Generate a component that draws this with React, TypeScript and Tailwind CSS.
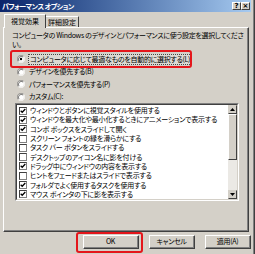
import React from "react";

const items: [boolean, string][] = [
  [true, "ウィンドウとボタンに視覚スタイルを使用する"],
  [true, "ウィンドウを最大化や最小化するときにアニメーションで表示する"],
  [true, "コンボ ボックスをスライドして開く"],
  [false, "スクリーン フォントの縁を滑らかにする"],
  [false, "タスク バー ボタンをスライドする"],
  [false, "デスクトップのアイコン名に影を付ける"],
  [true, "ドラッグ中にウィンドウの内容を表示する"],
  [false, "ヒントをフェードまたはスライドで表示する"],
  [true, "フォルダでよく使用するタスクを使用する"],
  [true, "マウス ポインタの下に影を表示する"],
];

function Radio({ on }: { on?: boolean }) {
  return (
    <svg width="8" height="8" viewBox="0 0 12 12" className="shrink-0">
      <path d="M10 2 A5.5 5.5 0 0 0 2 10" fill="none" stroke="#808080" strokeWidth="1.2" />
      <path d="M2 10 A5.5 5.5 0 0 0 10 2" fill="none" stroke="#ffffff" strokeWidth="1.2" />
      <circle cx="6" cy="6" r="4.3" fill="#ffffff" />
      <path d="M9 3 A4.3 4.3 0 0 0 3 9" fill="none" stroke="#404040" strokeWidth="1" />
      {on && <circle cx="6" cy="6" r="1.8" fill="#000" />}
    </svg>
  );
}

function Check({ on }: { on: boolean }) {
  return (
    <div className="w-[8px] h-[8px] shrink-0 bg-white border border-t-[#404040] border-l-[#404040] border-r-[#808080] border-b-[#808080] flex items-center justify-center">
      {on && (
        <svg width="6" height="6" viewBox="0 0 7 7">
          <path d="M0.8 3.2 L2.6 5 L6.2 1.2" fill="none" stroke="#000" strokeWidth="1.5" />
        </svg>
      )}
    </div>
  );
}

function Btn({ w, children }: { w: string; children: React.ReactNode }) {
  return (
    <div className={`${w} h-[14px] bg-[#d4d0c8] border-t border-l border-t-white border-l-white border-r border-b border-r-[#404040] border-b-[#404040] flex`}>
      <div className="flex-1 border-r border-b border-[#808080] flex items-center justify-center text-[7px] leading-none tracking-[-0.3px]">
        {children}
      </div>
    </div>
  );
}

function CapBtn({ children }: { children: React.ReactNode }) {
  return (
    <div className="w-[9px] h-[8px] bg-[#d4d0c8] border-t border-l border-t-white border-l-white border-r border-b border-r-[#404040] border-b-[#404040] flex items-center justify-center text-[7px] font-bold leading-none text-black font-['DejaVu_Sans',sans-serif]">
      {children}
    </div>
  );
}

export default function App() {
  return (
    <div className="w-[255px] h-[254px] overflow-hidden bg-[#d4d0c8] relative font-['Noto_Sans_CJK_JP',sans-serif] [font-feature-settings:'palt'] text-black">
      <div className="flex h-full">
        <div className="flex-1 flex flex-col min-w-0">
          {/* title bar */}
          <div className="h-[12px] shrink-0 flex items-center bg-gradient-to-r from-[#0a246a] to-[#a6caf0] pl-[2px] pr-[1px]">
            <span className="text-white text-[7px] font-bold leading-none tracking-[-0.5px]">パフォーマンス オプション</span>
            <div className="ml-auto flex">
              <CapBtn>?</CapBtn>
              <CapBtn>×</CapBtn>
            </div>
          </div>
          {/* tabs */}
          <div className="flex items-end h-[15px] pl-[4px] shrink-0">
            <div className="w-[42px] h-[14px] bg-[#d4d0c8] border-t border-l border-white border-r border-r-[#404040] flex items-center justify-center text-[7px] leading-none relative z-10 -mb-[1px]">
              視覚効果
            </div>
            <div className="w-[33px] h-[11px] border-t border-t-white border-r border-r-[#404040] flex items-center justify-center text-[7px] leading-none">
              詳細設定
            </div>
          </div>
          {/* panel */}
          <div className="ml-[3px] w-[246px] h-[205px] shrink-0 border-t border-l border-white border-r border-b border-r-[#404040] border-b-[#404040] flex">
            <div className="flex-1 border-r border-b border-[#808080] flex flex-col pl-[8px] pt-[3px]">
              <div className="text-[7px] leading-[8.5px] tracking-[-0.3px] whitespace-nowrap">
                コンピュータの Windows のデザインとパフォーマンスに使う設定を選択してくださ
                <br />
                い。
              </div>
              <div className="flex flex-col mt-[5px] pl-[5px] text-[7px] leading-none tracking-[-0.3px]">
                <div className="h-[12.5px] flex items-center gap-[3px]">
                  <Radio on />
                  <span className="border border-dotted border-[#444] px-[1px] py-[1px] bg-[#dcd9d3]">
                    コンピュータに応じて最適なものを自動的に選択する(L)
                  </span>
                </div>
                <div className="h-[12.5px] flex items-center gap-[4px]">
                  <Radio />
                  <span>デザインを優先する(B)</span>
                </div>
                <div className="h-[12.5px] flex items-center gap-[4px]">
                  <Radio />
                  <span>パフォーマンスを優先する(P)</span>
                </div>
                <div className="h-[12.5px] flex items-center gap-[4px]">
                  <Radio />
                  <span>カスタム(C):</span>
                </div>
              </div>
              {/* listbox */}
              <div className="ml-[3px] w-[224px] h-[98px] border-t border-l border-[#808080] border-r border-b border-r-white border-b-white flex">
                <div className="flex-1 border-t border-l border-[#404040] border-r border-b border-r-[#d4d0c8] border-b-[#d4d0c8] bg-white flex">
                  <div className="flex-1 flex flex-col pt-[1px] pl-[2px] text-[7px] leading-none tracking-[-0.2px]">
                    {items.map(([on, t], i) => (
                      <div key={i} className="h-[9.3px] flex items-center gap-[3px] whitespace-nowrap">
                        <Check on={on} />
                        <span>{t}</span>
                      </div>
                    ))}
                  </div>
                  {/* scrollbar */}
                  <div className="w-[9px] flex flex-col">
                    <div className="h-[9px] bg-[#d4d0c8] border-t border-l border-t-[#d4d0c8] border-l-[#d4d0c8] border-r border-b border-r-[#404040] border-b-[#404040] flex items-center justify-center">
                      <svg width="5" height="3" viewBox="0 0 5 3"><path d="M2.5 0 L5 3 L0 3 Z" fill="#000" /></svg>
                    </div>
                    <div className="h-[46px] bg-[#d4d0c8] border-t border-l border-t-white border-l-white border-r border-b border-r-[#404040] border-b-[#404040]" />
                    <div className="flex-1 bg-[#ebe9e5]" />
                    <div className="h-[9px] bg-[#d4d0c8] border-t border-l border-t-[#d4d0c8] border-l-[#d4d0c8] border-r border-b border-r-[#404040] border-b-[#404040] flex items-center justify-center">
                      <svg width="5" height="3" viewBox="0 0 5 3"><path d="M0 0 L5 0 L2.5 3 Z" fill="#000" /></svg>
                    </div>
                  </div>
                </div>
              </div>
            </div>
          </div>
          {/* buttons */}
          <div className="flex mt-[3px] pl-[83px] gap-[10px]">
            <Btn w="w-[56px]">OK</Btn>
            <Btn w="w-[46px]">キャンセル</Btn>
            <Btn w="w-[46px]">適用(A)</Btn>
          </div>
        </div>
        <div className="w-[2px] bg-[#d4d0c8]" />
        <div className="w-[1px] bg-[#808080]" />
        <div className="w-[1px] bg-[#404040]" />
      </div>
      {/* annotations */}
      <div className="absolute left-[10px] top-[50px] w-[182px] h-[18px] border-[2px] border-[#e4161b] rounded-[3px]" />
      <div className="absolute left-[76px] top-[232px] w-[67px] h-[21px] border-[2px] border-[#e4161b] rounded-[3px]" />
    </div>
  );
}
